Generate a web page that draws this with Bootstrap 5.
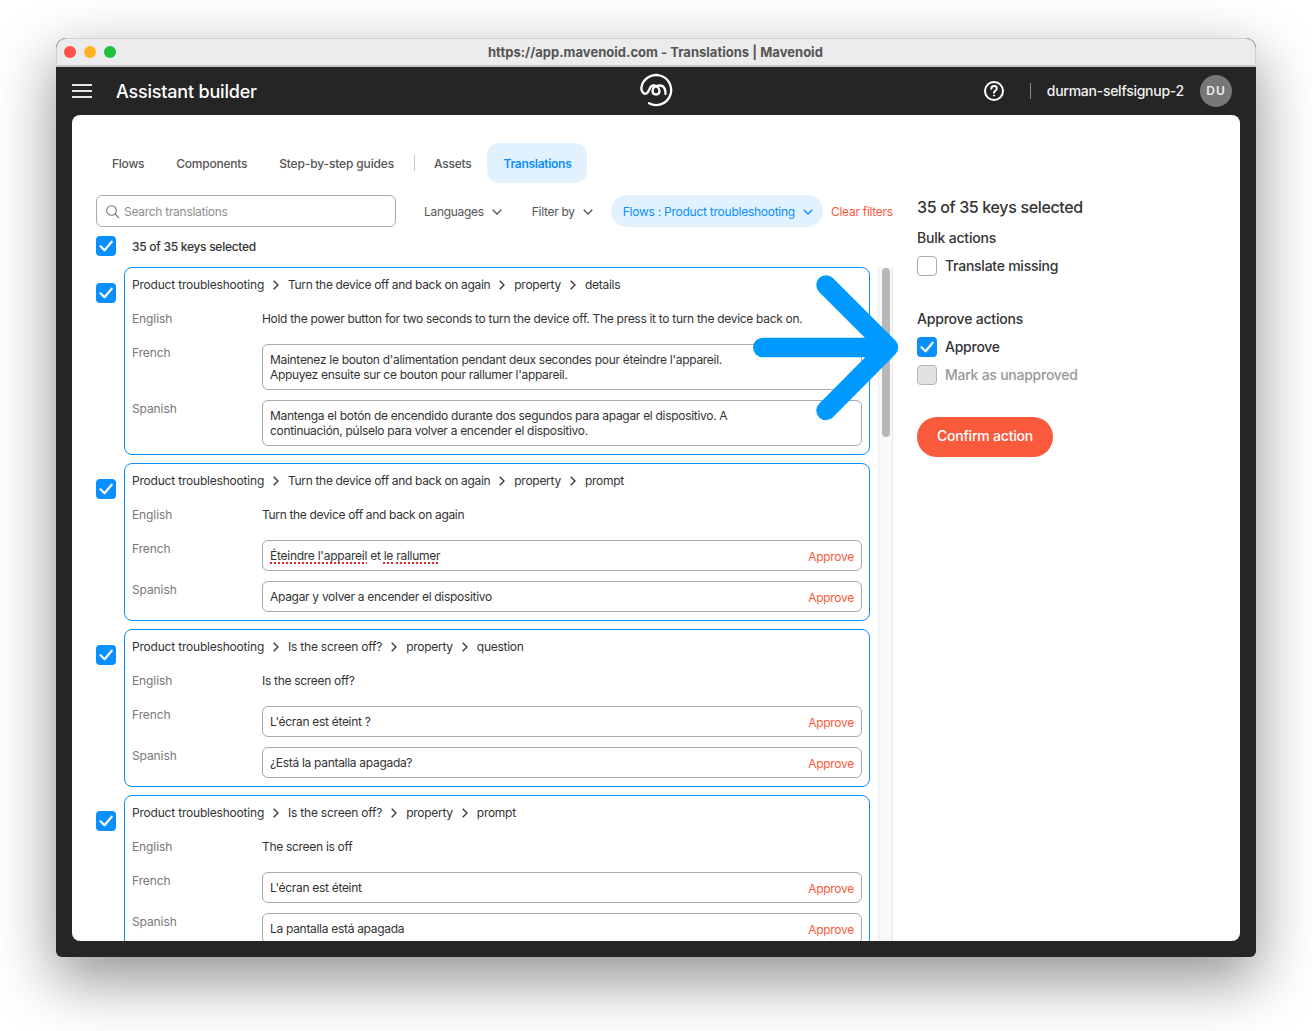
<!DOCTYPE html>
<html lang="en"><head><meta charset="utf-8"><title>Translations | Mavenoid</title>
<link rel="stylesheet" href="https://cdn.jsdelivr.net/npm/bootstrap@5.3.0/dist/css/bootstrap.min.css">
<style>
html,body{height:100%;background:#fff;overflow:hidden}
body{font-family:Inter,"Liberation Sans",sans-serif;font-size:12px;line-height:18px;letter-spacing:-.3px;color:#333;padding:38px 56px 74px;position:relative}
.win{height:919px;border-radius:10px 10px 6px 6px;box-shadow:0 22px 60px 2px rgba(0,0,0,.42);background:#252525;overflow:hidden}
.tbar{height:29px;background:#ececec;border:1px solid #d0d0d0;border-bottom:2px solid #c4c4c4;border-radius:10px 10px 0 0;position:relative;flex:none}
.dot{width:12px;height:12px;border-radius:50%}
.dot.r{background:#ff5147}.dot.y{background:#ffb224}.dot.g{background:#1fc13a}
.tdots{gap:8px;padding-left:7px}
.ttext{font-size:13px;font-weight:700;letter-spacing:.02px;color:#555;position:absolute;left:431px;top:4px;white-space:nowrap}
.hdr{height:48px;flex:none;padding:0 24px 0 16px;color:#fff;position:relative}
.htitle{font-size:18px;font-weight:500;letter-spacing:-.2px;margin-left:24px;line-height:24px;padding-top:1px}
.hlogo{position:absolute;left:582.500px;top:6px}
.vsep{width:1px;height:16px;background:#8a8a8a;margin:0 16px 0 25px}
.uname{font-size:14px;font-weight:500;color:#f2f2f2;margin-right:16px;letter-spacing:-.26px}
.avatar{width:32px;height:32px;border-radius:50%;background:#777;font-size:12px;font-weight:600;letter-spacing:1px;color:#eee}
.sheet{flex:1;min-height:0;margin:0 16px 16px;background:#fff;border-radius:8px;padding:28px 0 0 24px;overflow:hidden}
.tabs{height:40px;margin-bottom:12px;flex:none}
.tabb{padding:1px 16px 0;line-height:39px;font-weight:500;color:#555;border-radius:12px;white-space:nowrap;letter-spacing:-.25px}
.tabb.widr{letter-spacing:-.14px}
.tabb.on{background:#e1f1fe;color:#0a8fff;font-weight:600;letter-spacing:-.28px}
.tabsep{width:1px;height:16px;background:#c8c8c8;margin:0 3px 0 4px}
.leftc{width:797px;min-height:0}
.filters{height:32px;flex:none}
.searchb{width:300px;flex:none;height:32px;border:1px solid #aaa;border-radius:6px;padding:1px 8px 0;color:#8f8f8f;letter-spacing:-.28px}
.filt{color:#555;white-space:nowrap;padding-top:2px}
.pill{height:32px;border-radius:16px;background:#e1f1fe;color:#0a8fff;padding:2px 10px 0 12px;white-space:nowrap;letter-spacing:-.25px}
.clearf{color:#fa5a3c;white-space:nowrap;margin-left:8px;padding-top:2px;letter-spacing:-.28px}
.cb{width:20px;height:20px;border-radius:4px;flex:none;display:flex;align-items:center;justify-content:center}
.cb.yes{background:#0a8fff}
.cb.no{border:1px solid #aaa;background:#fff}
.cb.dis{border:1px solid #b5b5b5;background:#e2e2e2}
.allrow{height:20px;margin-top:9px;margin-bottom:11px;flex:none;font-weight:500}
.alltext{padding-top:2px;letter-spacing:-.28px}
.listwrap{flex:1;min-height:0;overflow:hidden}
.items{width:774px;flex:none;overflow:hidden}
.itemrow{margin-bottom:8px}
.itemrow>.cb{margin-top:16px;margin-right:8px}
.kcard{width:746px;flex:none;border:1px solid #0a8fff;border-radius:8px;padding:8px 7px 8px 7px}
.crumb{white-space:nowrap;color:#333;letter-spacing:-.27px}
.crumb svg{margin:0 9px;flex:none}
.crumbhead{letter-spacing:-.2px}
.seglong{letter-spacing:-.335px}
.segshort{letter-spacing:-.22px}
.frow{display:flex;margin-top:16px}
.frow.nx{margin-top:10px}
.flabel{width:130px;flex:none;color:#777;letter-spacing:-.1px}
.fbox{flex:1;border:1px solid #aaa;border-radius:6px;padding:7px;line-height:15px;color:#333;display:flex;justify-content:space-between;min-width:0}
.appr{color:#fa5a3c;margin-top:1px;margin-bottom:-1px;letter-spacing:-.28px}
.spell{text-decoration:underline dotted #e0262c 1.500px;text-underline-offset:2px}
.spellrow{letter-spacing:-.26px}
.track{width:15px;flex:none;margin-left:8px;background:#f8f8f8;border-left:1px solid #ececec;border-right:1px solid #e8e8e8;padding:1px 2px 0 3px}
.thumb{height:169px;border-radius:4px;background:#b8b8b8}
.rightc{padding-left:24px;width:320px}
.rtitle{font-size:16px;font-weight:500;line-height:24px;margin-top:0;letter-spacing:-.34px}
.rhead{font-size:14px;font-weight:500;line-height:18px;letter-spacing:-.2px}
.rhead.first{margin-top:10px}
.rhead.second{margin-top:34px}
.ropt{font-size:14px;font-weight:500;gap:8px;height:20px;letter-spacing:-.25px;margin-top:9px}
.ropt.tight{margin-top:8px}
.muted2{color:#999}
.cta{background:#fa5a3c;color:#fff;border:0;border-radius:20px;height:40px;width:136px;font-size:14px;font-weight:500;padding:0 0 2px;letter-spacing:-.2px;margin-top:32px;line-height:18px}
.gapl1{margin-left:28px}
.gapl2{margin-left:30px}
.gapl3{margin-left:18px}
.bigarrow{position:absolute;left:740px;top:260px;pointer-events:none}
.svgdefs{width:0;height:0;position:absolute}
.tick{fill:none;stroke:#fff;stroke-width:2.200;stroke-linecap:round;stroke-linejoin:round}
.chev{fill:none;stroke:#333;stroke-width:1.300}
.drop{fill:none;stroke:#555;stroke-width:1.300}
.drop.blue{stroke:#0a8fff}
</style></head>
<body>
<svg class="svgdefs" aria-hidden="true"><defs>
  <symbol id="i-tick" viewBox="0 0 20 20"><path class="tick" d="M4.500 10.300 8.500 14.300 15.700 5.700"/></symbol>
  <symbol id="i-chev" viewBox="0 0 6 10"><path d="M.7.700 5 5 .7 9.300"/></symbol>
  <symbol id="i-drop" viewBox="0 0 10 6"><path d="M.7.700 5 5 9.300.700"/></symbol>
</defs></svg>
<div class="win d-flex flex-column">
  <div class="tbar d-flex align-items-center tdots">
    <span class="dot r"></span><span class="dot y"></span><span class="dot g"></span>
    <span class="ttext">https://app.mavenoid.com - Translations | Mavenoid</span>
  </div>
  <div class="hdr d-flex align-items-center">
    <svg width="20" height="14" viewBox="0 0 20 14" fill="none" stroke="#e6e6e6" stroke-width="2"><path d="M0 1h20M0 7h20M0 13h20"/></svg>
    <span class="htitle">Assistant builder</span>
    <svg class="hlogo" width="34" height="34" viewBox="0 0 34 34" fill="none" stroke="#fff" stroke-width="2.300" stroke-linecap="round"><path d="M10 30.200A15 15 0 1 0 2.300 15C2.300 19 5 21.500 7.500 20.500C10.500 19.300 10 13 14 12.500C17 12 20.500 15 20.500 18C20.500 20 19 21.500 17 21.500C15 21.500 13.500 20 13.500 18C13.500 14.500 17 12.500 21 12.500C24.500 12.500 26.500 16 26.500 21"/></svg>
    <div class="ms-auto d-flex align-items-center">
      <svg width="22" height="22" viewBox="0 0 22 22" fill="none" stroke="#fff" stroke-width="2" stroke-linecap="round"><circle cx="11" cy="11" r="9"/><path d="M8.300 8.700c0-1.600 1.200-2.600 2.800-2.600s2.700 1 2.700 2.400c0 2.100-2.800 2.300-2.800 4.200"/><circle cx="11" cy="15.600" r=".6" fill="#fff" stroke-width="1"/></svg>
      <span class="vsep"></span>
      <span class="uname">durman-selfsignup-2</span>
      <span class="avatar d-flex align-items-center justify-content-center">DU</span>
    </div>
  </div>
  <div class="sheet d-flex flex-column">
    <div class="tabs d-flex align-items-center">
      <span class="tabb">Flows</span><span class="tabb">Components</span><span class="tabb widr">Step-by-step guides</span><span class="tabsep"></span><span class="tabb">Assets</span><span class="tabb on">Translations</span>
    </div>
    <div class="d-flex flex-grow-1 leftc-wrap">
      <div class="leftc d-flex flex-column">
        <div class="filters d-flex align-items-center">
          <div class="searchb d-flex align-items-center gap-1">
            <svg width="15" height="15" viewBox="0 0 15 15" fill="none" stroke="#777" stroke-width="1.100"><circle cx="6.500" cy="6.500" r="4.800"/><path d="M10 10l4 4"/></svg>
            <span>Search translations</span>
          </div>
          <span class="filt d-flex align-items-center gap-2 gapl1">Languages <svg class="drop" width="10" height="6"><use href="#i-drop"/></svg></span>
          <span class="filt d-flex align-items-center gap-2 gapl2">Filter by <svg class="drop" width="10" height="6"><use href="#i-drop"/></svg></span>
          <span class="pill d-flex align-items-center gap-2 gapl3">Flows : Product troubleshooting <svg class="drop blue" width="10" height="6"><use href="#i-drop"/></svg></span>
          <span class="clearf">Clear filters</span>
        </div>
        <div class="allrow d-flex align-items-center">
          <span class="cb yes me-3"><svg width="20" height="20"><use href="#i-tick"/></svg></span>
          <span class="alltext">35 of 35 keys selected</span>
        </div>
        <div class="listwrap d-flex">
          <div class="items">

            <div class="itemrow d-flex align-items-start">
              <span class="cb yes"><svg width="20" height="20"><use href="#i-tick"/></svg></span>
              <div class="kcard">
                <div class="crumb d-flex align-items-center"><span class="crumbhead">Product troubleshooting</span><svg class="chev" width="6" height="10"><use href="#i-chev"/></svg><span class="seglong">Turn the device off and back on again</span><svg class="chev" width="6" height="10"><use href="#i-chev"/></svg>property<svg class="chev" width="6" height="10"><use href="#i-chev"/></svg>details</div>
                <div class="frow"><span class="flabel">English</span><span>Hold the power button for two seconds to turn the device off. The press it to turn the device back on.</span></div>
                <div class="frow"><span class="flabel">French</span><div class="fbox"><span>Maintenez le bouton d'alimentation pendant deux secondes pour éteindre l'appareil.<br>Appuyez ensuite sur ce bouton pour rallumer l'appareil.</span></div></div>
                <div class="frow nx"><span class="flabel">Spanish</span><div class="fbox"><span>Mantenga el botón de encendido durante dos segundos para apagar el dispositivo. A<br>continuación, púlselo para volver a encender el dispositivo.</span></div></div>
              </div>
            </div>

            <div class="itemrow d-flex align-items-start">
              <span class="cb yes"><svg width="20" height="20"><use href="#i-tick"/></svg></span>
              <div class="kcard">
                <div class="crumb d-flex align-items-center"><span class="crumbhead">Product troubleshooting</span><svg class="chev" width="6" height="10"><use href="#i-chev"/></svg><span class="seglong">Turn the device off and back on again</span><svg class="chev" width="6" height="10"><use href="#i-chev"/></svg>property<svg class="chev" width="6" height="10"><use href="#i-chev"/></svg>prompt</div>
                <div class="frow"><span class="flabel">English</span><span class="seglong">Turn the device off and back on again</span></div>
                <div class="frow"><span class="flabel">French</span><div class="fbox"><span class="spellrow"><span class="spell">Éteindre l'appareil</span> et <span class="spell">le</span> <span class="spell">rallumer</span></span><span class="appr">Approve</span></div></div>
                <div class="frow nx"><span class="flabel">Spanish</span><div class="fbox"><span>Apagar y volver a encender el dispositivo</span><span class="appr">Approve</span></div></div>
              </div>
            </div>

            <div class="itemrow d-flex align-items-start">
              <span class="cb yes"><svg width="20" height="20"><use href="#i-tick"/></svg></span>
              <div class="kcard">
                <div class="crumb d-flex align-items-center"><span class="crumbhead">Product troubleshooting</span><svg class="chev" width="6" height="10"><use href="#i-chev"/></svg><span class="segshort">Is the screen off?</span><svg class="chev" width="6" height="10"><use href="#i-chev"/></svg>property<svg class="chev" width="6" height="10"><use href="#i-chev"/></svg>question</div>
                <div class="frow"><span class="flabel">English</span><span>Is the screen off?</span></div>
                <div class="frow"><span class="flabel">French</span><div class="fbox"><span>L'écran est éteint ?</span><span class="appr">Approve</span></div></div>
                <div class="frow nx"><span class="flabel">Spanish</span><div class="fbox"><span>¿Está la pantalla apagada?</span><span class="appr">Approve</span></div></div>
              </div>
            </div>

            <div class="itemrow d-flex align-items-start">
              <span class="cb yes"><svg width="20" height="20"><use href="#i-tick"/></svg></span>
              <div class="kcard">
                <div class="crumb d-flex align-items-center"><span class="crumbhead">Product troubleshooting</span><svg class="chev" width="6" height="10"><use href="#i-chev"/></svg><span class="segshort">Is the screen off?</span><svg class="chev" width="6" height="10"><use href="#i-chev"/></svg>property<svg class="chev" width="6" height="10"><use href="#i-chev"/></svg>prompt</div>
                <div class="frow"><span class="flabel">English</span><span>The screen is off</span></div>
                <div class="frow"><span class="flabel">French</span><div class="fbox"><span>L'écran est éteint</span><span class="appr">Approve</span></div></div>
                <div class="frow nx"><span class="flabel">Spanish</span><div class="fbox"><span>La pantalla está apagada</span><span class="appr">Approve</span></div></div>
              </div>
            </div>

          </div>
          <div class="track"><div class="thumb"></div></div>
        </div>
      </div>
      <div class="rightc">
        <div class="rtitle">35 of 35 keys selected</div>
        <div class="rhead first">Bulk actions</div>
        <div class="ropt d-flex align-items-center"><span class="cb no"></span>Translate missing</div>
        <div class="rhead second">Approve actions</div>
        <div class="ropt d-flex align-items-center"><span class="cb yes"><svg width="20" height="20"><use href="#i-tick"/></svg></span>Approve</div>
        <div class="ropt tight d-flex align-items-center muted2"><span class="cb dis"></span>Mark as unapproved</div>
        <button class="btn cta">Confirm action</button>
      </div>
    </div>
  </div>
</div>
<svg class="bigarrow" width="170" height="170" viewBox="0 0 170 170" fill="none" stroke="#0099ff" stroke-width="19.500" stroke-linecap="round" stroke-linejoin="round"><path d="M22.800 87.500H148M86 25l62.500 62.500L86 150.500"/></svg>
<script src="https://cdn.jsdelivr.net/npm/bootstrap@5.3.0/dist/js/bootstrap.bundle.min.js"></script>
</body></html>
